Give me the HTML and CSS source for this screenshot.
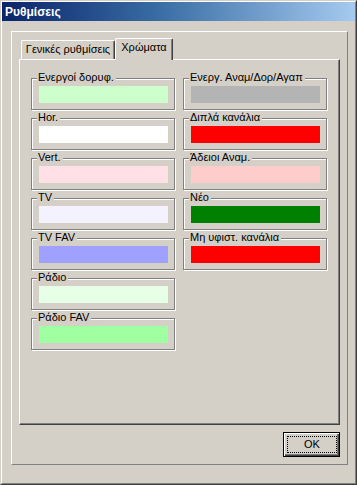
FILE: index.html
```html
<!DOCTYPE html>
<html lang="el">
<head>
<meta charset="utf-8">
<title>Ρυθμίσεις</title>
<link rel="stylesheet" href="styles.css">
</head>
<body>
<div class="window">
  <div class="window-inner">
    <div class="titlebar"><span class="title">Ρυθμίσεις</span></div>
    <div class="content">
      <div class="frame">
        <div class="tabs">
          <div class="tab tab-general">Γενικές ρυθμίσεις</div>
          <div class="tab tab-active">Χρώματα</div>
        </div>
        <div class="panel">
          <div class="column">
            <div class="group"><span class="group-label">Ενεργοί δορυφ.</span><div class="swatch c-sat"></div></div>
            <div class="group"><span class="group-label">Hor.</span><div class="swatch c-hor"></div></div>
            <div class="group"><span class="group-label">Vert.</span><div class="swatch c-vert"></div></div>
            <div class="group"><span class="group-label">TV</span><div class="swatch c-tv"></div></div>
            <div class="group"><span class="group-label">TV FAV</span><div class="swatch c-tvfav"></div></div>
            <div class="group"><span class="group-label">Ράδιο</span><div class="swatch c-radio"></div></div>
            <div class="group"><span class="group-label">Ράδιο FAV</span><div class="swatch c-radiofav"></div></div>
          </div>
          <div class="column">
            <div class="group"><span class="group-label">Ενεργ. Αναμ/Δορ/Αγαπ</span><div class="swatch c-active"></div></div>
            <div class="group"><span class="group-label">Διπλά κανάλια</span><div class="swatch c-dup"></div></div>
            <div class="group"><span class="group-label">Άδειοι Αναμ.</span><div class="swatch c-empty"></div></div>
            <div class="group"><span class="group-label">Νέο</span><div class="swatch c-new"></div></div>
            <div class="group"><span class="group-label">Μη υφιστ. κανάλια</span><div class="swatch c-missing"></div></div>
          </div>
        </div>
        <div class="footer">
          <button class="btn-ok" type="button"><span class="focus">OK</span></button>
        </div>
      </div>
    </div>
  </div>
</div>
</body>
</html>
```
FILE: styles.css
```css
* { box-sizing: border-box; }
html, body {
  margin: 0;
  padding: 0;
  background: #d4d0c8;
}
body {
  font-family: "Liberation Sans", Arial, sans-serif;
  font-size: 11px;
  color: #000;
}
.window {
  width: 357px;
  height: 485px;
  border: 1px solid;
  border-color: #d4d0c8 #404040 #404040 #d4d0c8;
  background: #d4d0c8;
}
.window-inner {
  height: 100%;
  border: 1px solid;
  border-color: #ffffff #808080 #808080 #ffffff;
  display: flex;
  flex-direction: column;
}
.titlebar {
  height: 19px;
  flex: none;
  background: linear-gradient(to right, #0a246a 0%, #3a6ea5 45%, #a6caf0 100%);
  display: flex;
  align-items: center;
  padding-left: 3px;
}
.title {
  color: #fff;
  font-weight: bold;
  font-size: 12px;
  line-height: 14px;
}
.content {
  flex: 1;
  display: flex;
  padding: 10px 7px 18px 9px;
}
.frame {
  flex: 1;
  display: flex;
  flex-direction: column;
  border: 1px solid;
  border-color: #ffffff #808080 #808080 #ffffff;
  padding: 6px 7px 7px 7px;
}
.tabs {
  height: 21px;
  flex: none;
  display: flex;
  align-items: flex-end;
  padding-left: 2px;
}
.tab {
  border-top: 1px solid #fff;
  border-left: 1px solid #fff;
  border-right: 1px solid #404040;
  box-shadow: inset -1px 0 0 #808080;
  border-radius: 2px 2px 0 0;
  text-align: center;
  line-height: 13px;
  background: #d4d0c8;
}
.tab-general {
  width: 94px;
  height: 19px;
  padding-top: 2px;
}
.tab-active {
  width: 58px;
  height: 22px;
  margin-bottom: -1px;
  padding-top: 2px;
  position: relative;
  z-index: 1;
}
.panel {
  flex: 1;
  display: flex;
  gap: 8px;
  border: 1px solid;
  border-color: #ffffff #404040 #404040 #ffffff;
  box-shadow: inset -1px -1px 0 #808080;
  padding: 18px 11px 0 11px;
}
.column {
  width: 144px;
  display: flex;
  flex-direction: column;
  gap: 8px;
}
.group {
  position: relative;
  height: 32px;
  border: 1px solid #808080;
  box-shadow: inset 1px 1px 0 #fff, 1px 1px 0 #fff;
  padding: 7px 6px 5px 7px;
}
.group-label {
  position: absolute;
  top: -8px;
  left: 5px;
  padding: 0 2px 0 1px;
  background: #d4d0c8;
  line-height: 13px;
  white-space: nowrap;
}
.swatch {
  height: 17px;
}
.c-sat { background: #ccffcc; }
.c-hor { background: #ffffff; }
.c-vert { background: #ffe0e6; }
.c-tv { background: #f4f2ff; }
.c-tvfav { background: #a0a0ff; }
.c-radio { background: #e6ffe6; }
.c-radiofav { background: #a0ffa0; }
.c-active { background: #b4b4b4; }
.c-dup { background: #ff0000; }
.c-empty { background: #ffcccc; }
.c-new { background: #008000; }
.c-missing { background: #ff0000; }
.footer {
  flex: none;
  display: flex;
  justify-content: flex-end;
  margin-top: 7px;
}
.btn-ok {
  appearance: none;
  width: 57px;
  height: 25px;
  margin: 0;
  border: 1px solid #000;
  background: #d4d0c8;
  box-shadow: inset 1px 1px 0 #fff, inset -1px -1px 0 #404040, inset -2px -2px 0 #808080;
  padding: 3px 2px 3px 3px;
  display: flex;
  font-family: "Liberation Sans", Arial, sans-serif;
  font-size: 11px;
  color: #000;
}
.focus {
  flex: 1;
  border: 1px dotted #000;
  display: flex;
  align-items: center;
  justify-content: center;
  line-height: 13px;
}
```
